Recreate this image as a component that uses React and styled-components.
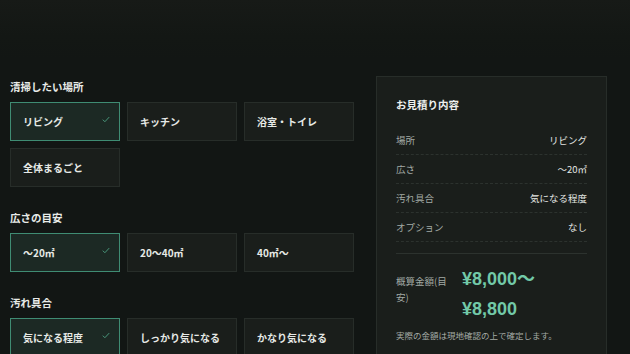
import styled, { createGlobalStyle } from "styled-components";

const GlobalStyle = createGlobalStyle`
  * { box-sizing: border-box; }
  html, body {
    margin: 0;
    background: #121614;
  }
  body {
    font-family: "Noto Sans CJK JP", "Noto Sans", sans-serif;
    color: #e4e7e4;
    background: linear-gradient(180deg, #171a17 0px, #131714 36px, #121614 60px);
    min-height: 354px;
  }
`;

const sections = [
  {
    title: "清掃したい場所",
    options: ["リビング", "キッチン", "浴室・トイレ", "全体まるごと"],
    selected: 0,
  },
  {
    title: "広さの目安",
    options: ["〜20㎡", "20〜40㎡", "40㎡〜"],
    selected: 0,
  },
  {
    title: "汚れ具合",
    options: ["気になる程度", "しっかり気になる", "かなり気になる"],
    selected: 0,
  },
];

const summary = [
  ["場所", "リビング"],
  ["広さ", "〜20㎡"],
  ["汚れ具合", "気になる程度"],
  ["オプション", "なし"],
];

const Check = () => (
  <CheckMark viewBox="0 0 10 8" aria-hidden="true">
    <polyline points="1,4.2 3.6,6.8 9,1" />
  </CheckMark>
);

const App = () => {
  return (
    <>
      <GlobalStyle />
      <Page>
        <Form>
          {sections.map((s) => (
            <Section key={s.title}>
              <Heading>{s.title}</Heading>
              <Grid>
                {s.options.map((o, i) => (
                  <Option key={o} $active={i === s.selected}>
                    {o}
                    {i === s.selected && <Check />}
                  </Option>
                ))}
              </Grid>
            </Section>
          ))}
        </Form>
        <Panel>
          <PanelTitle>お見積り内容</PanelTitle>
          <List>
            {summary.map(([k, v]) => (
              <Row key={k}>
                <Label>{k}</Label>
                <Value>{v}</Value>
              </Row>
            ))}
          </List>
          <Total>
            <TotalLabel>概算金額(目安)</TotalLabel>
            <Price>¥8,000〜 ¥8,800</Price>
          </Total>
          <Note>実際の金額は現地確認の上で確定します。</Note>
        </Panel>
      </Page>
    </>
  );
};

const Page = styled.div`
  display: grid;
  grid-template-columns: 344px 231px;
  column-gap: 22px;
  align-items: start;
  padding: 76px 0 0 10px;
`;

const Form = styled.div`
  display: flex;
  flex-direction: column;
  gap: 24px;
  padding-top: 4px;
`;

const Section = styled.section`
  display: flex;
  flex-direction: column;
`;

const Heading = styled.h3`
  margin: 0 0 8px;
  font-size: 10.5px;
  line-height: 14px;
  font-weight: 700;
  color: #e8ebe8;
`;

const Grid = styled.div`
  display: grid;
  grid-template-columns: repeat(3, 1fr);
  gap: 7px;
`;

const Option = styled.div`
  position: relative;
  height: 39px;
  display: flex;
  align-items: center;
  padding: 0 12px;
  font-size: 10px;
  font-weight: 700;
  color: #e6e9e6;
  background: ${(p) => (p.$active ? "#1c2924" : "#1a1e1b")};
  border: 1px solid ${(p) => (p.$active ? "#3f8c73" : "#272d29")};
`;

const CheckMark = styled.svg`
  position: absolute;
  top: 13px;
  right: 9px;
  width: 8px;
  height: 7px;
  fill: none;
  stroke: #4b9c80;
  stroke-width: 1.2;
`;

const Panel = styled.aside`
  background: #1a1e1b;
  border: 1px solid #272d29;
  padding: 21px 19px 12px;
`;

const PanelTitle = styled.h2`
  margin: 0 0 14px;
  font-size: 10.5px;
  line-height: 14px;
  font-weight: 700;
  color: #eef0ee;
`;

const List = styled.div`
  display: flex;
  flex-direction: column;
`;

const Row = styled.div`
  display: flex;
  justify-content: space-between;
  align-items: center;
  height: 29px;
  font-size: 9.5px;
  border-bottom: 1px dashed #2c322e;
`;

const Label = styled.span`
  color: #a3aaa5;
`;

const Value = styled.span`
  color: #e3e6e3;
`;

const Total = styled.div`
  display: flex;
  align-items: baseline;
  gap: 8px;
  margin-top: 11px;
  padding-top: 10px;
  border-top: 1px solid #2c322e;
`;

const TotalLabel = styled.span`
  width: 58px;
  font-size: 9.5px;
  line-height: 16px;
  color: #a3aaa5;
`;

const Price = styled.span`
  width: 110px;
  font-family: "Liberation Sans", "Noto Sans CJK JP", sans-serif;
  font-size: 18px;
  line-height: 30px;
  font-weight: 700;
  color: #72c9a8;
`;

const Note = styled.p`
  margin: 4px 0 0;
  font-size: 8.5px;
  line-height: 14px;
  color: #a3aaa5;
`;

export default App;
